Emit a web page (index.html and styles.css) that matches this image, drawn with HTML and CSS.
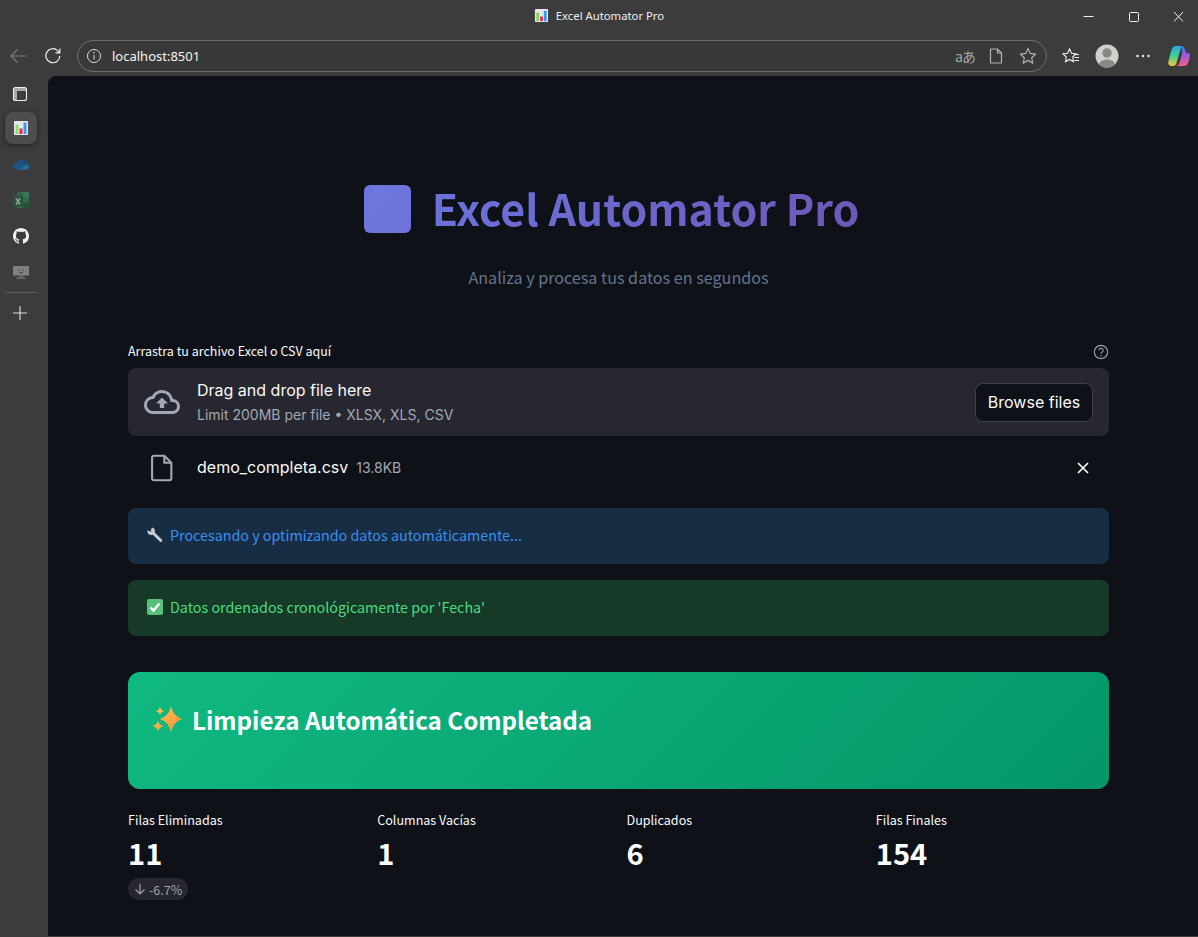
FILE: index.html
```html
<!DOCTYPE html>
<html lang="es">
<head>
<meta charset="utf-8">
<title>Excel Automator Pro</title>
<link rel="stylesheet" href="styles.css">
</head>
<body>
<div class="window">
  <header class="titlebar">
    <div class="title-spacer"></div>
    <div class="window-title">
      <svg class="favicon" viewBox="0 0 16 16"><rect x="1" y="1" width="14" height="14" rx="1" fill="#e8e8ec"/><rect x="2.5" y="5" width="3" height="9" fill="#7bd651"/><rect x="6.5" y="9" width="3" height="5" fill="#e8285f"/><rect x="10.5" y="3" width="3" height="11" fill="#2e9df0"/></svg>
      <span>Excel Automator Pro</span>
    </div>
    <div class="window-controls">
      <svg class="win-btn" viewBox="-3 0 45 32"><path d="M17.500 16.500h10" stroke="#f2f2f2" fill="none"/></svg>
      <svg class="win-btn" viewBox="-3 0 45 32"><rect x="18.500" y="12.500" width="9" height="9" rx="1" stroke="#f2f2f2" fill="none"/></svg>
      <svg class="win-btn" viewBox="-3 0 45 32"><path d="M18 12l9 9.500M27 12l-9 9.500" stroke="#f2f2f2" fill="none"/></svg>
    </div>
  </header>
  <nav class="toolbar">
    <div class="tool-btn"><svg width="18" height="16" viewBox="0 0 18 16"><path d="M17 8H2M8.500 1.500 2 8l6.500 6.500" stroke="#7d7d7d" stroke-width="1.200" fill="none"/></svg></div>
    <div class="tool-btn"><svg width="18" height="18" viewBox="0 0 18 18"><path d="M15.800 9a7 7 0 1 1-2-5.200L15.600 5.600M15.800 1.500v4.300h-4.300" stroke="#f0f0f0" stroke-width="1.200" fill="none"/></svg></div>
    <div class="address">
      <svg class="addr-info" width="16" height="16" viewBox="0 0 16 16"><circle cx="8" cy="8" r="6.500" stroke="#e0e0e0" fill="none"/><path d="M8 7v4.500" stroke="#e0e0e0" fill="none"/><circle cx="8" cy="4.800" r=".8" fill="#e0e0e0"/></svg>
      <span class="url">localhost:8501</span>
      <span class="translate">aあ</span>
      <svg class="addr-page" width="14" height="16" viewBox="0 0 14 16"><path d="M2.500 1h6l4 4v9a1 1 0 0 1-1 1h-9a1 1 0 0 1-1-1V2a1 1 0 0 1 1-1zM8.500 1v4h4" stroke="#b5b5b5" stroke-width="1.200" fill="none"/></svg>
      <svg class="addr-star" width="18" height="18" viewBox="0 0 18 18"><path d="M9 1.500l2.300 4.900 5.300.7-3.900 3.700 1 5.300L9 13.500l-4.700 2.600 1-5.300-3.900-3.700 5.300-.7z" stroke="#b5b5b5" stroke-width="1.100" fill="none"/></svg>
    </div>
    <div class="tool-right">
      <div class="tool-btn"><svg width="18" height="18" viewBox="0 0 18 18"><path d="M7.500 2l2 4.300 4.500.6-3.300 3.100.8 4.600-4-2.200-4 2.200.8-4.600L1 6.900l4.500-.6z" stroke="#f0f0f0" stroke-width="1.100" fill="none"/><path d="M12.500 7.500h4.500M12.500 10.500h4.500M12.500 13.500h4.500" stroke="#f0f0f0" fill="none"/></svg></div>
      <div class="tool-btn"><svg width="24" height="24" viewBox="0 0 24 24"><clipPath id="av"><circle cx="12" cy="12" r="11.500"/></clipPath><circle cx="12" cy="12" r="11.500" fill="#d3d0cb"/><g clip-path="url(#av)" fill="#8a8885"><circle cx="12" cy="9" r="4.700"/><ellipse cx="12" cy="21" rx="8" ry="5.500"/></g></svg></div>
      <div class="tool-btn"><svg width="16" height="4" viewBox="0 0 16 4"><circle cx="2.500" cy="2" r="1.200" fill="#eee"/><circle cx="8" cy="2" r="1.200" fill="#eee"/><circle cx="13.500" cy="2" r="1.200" fill="#eee"/></svg></div>
      <div class="tool-btn"><svg width="24" height="24" viewBox="0 0 24 24"><defs><linearGradient id="cpa" x1="0" y1="0" x2="0" y2="1"><stop offset="0" stop-color="#28a7e8"/><stop offset=".5" stop-color="#3ed08a"/><stop offset="1" stop-color="#f7c53a"/></linearGradient><linearGradient id="cpb" x1="0" y1="0" x2="0" y2="1"><stop offset="0" stop-color="#3f7ff0"/><stop offset=".5" stop-color="#a854e0"/><stop offset="1" stop-color="#f4607c"/></linearGradient></defs><path d="M8 2h6.500L9.500 19a4 4 0 0 1-3.800 3H4.500a3.200 3.200 0 0 1-3.200-4C2.500 13 4 7 5 5a4 4 0 0 1 3-3z" fill="url(#cpa)"/><path d="M14 2c2 0 3.200 1 3.800 3l1.200 4h1.500c2 0 3 1.500 2.400 3.500l-1.600 6c-.6 2-2 3.500-4.300 3.500H8.500c2 0 3.500-1.500 4-3.500l2.500-8.500c.8-3-.2-5-1-8z" fill="url(#cpb)"/></svg></div>
    </div>
  </nav>
  <div class="workspace">
    <aside class="sidebar">
      <div class="side-item side-first"><svg width="16" height="16" viewBox="0 0 16 16"><path d="M1.500 5h13V3a1.500 1.500 0 0 0-1.500-1.500H3A1.500 1.500 0 0 0 1.500 3zM1.500 5h3.500v9.500H3A1.500 1.500 0 0 1 1.500 13z" fill="#a9a9a9"/><rect x="1.500" y="1.500" width="13" height="13" rx="2" stroke="#eee" stroke-width="1.100" fill="none"/></svg></div>
      <div class="side-item side-active"><svg width="16" height="16" viewBox="0 0 16 16"><rect x="1" y="1" width="14" height="14" rx="1" fill="#e8e8ec"/><rect x="2.500" y="4.500" width="3" height="9.500" fill="#8fe06a"/><rect x="6.500" y="8.500" width="3" height="5.500" fill="#e8285f"/><rect x="10.500" y="2.500" width="3" height="11.500" fill="#2e9df0"/></svg></div>
      <div class="side-item"><svg width="16" height="12" viewBox="0 0 16 12"><path d="M1 7.500A3 3 0 0 1 4 5a4.500 4.500 0 0 1 8-1.500 3.500 3.500 0 0 1 4 3.800L9 6z" fill="#17507f"/><path d="M4 5c1.500-1 3.500-.5 5 1l4 2-9 3.500A2.800 2.800 0 0 1 .3 8 3 3 0 0 1 4 5z" fill="#1b5585"/><path d="M13 6.500c1.500 0 3 1 3 2.700 0 1.500-1.200 2.500-2.500 2.500h-9L10 9z" fill="#256c9f"/></svg></div>
      <div class="side-item"><svg class="dim-icon" width="16" height="16" viewBox="0 0 16 16"><path d="M4 0h12v16H4z" fill="#2c6f4c"/><path d="M10 0h6v5h-6z" fill="#37835d"/><path d="M10 11h6v5h-6z" fill="#215639"/><rect x="0" y="3.500" width="10" height="11" fill="#215a3c"/><path d="M3 6.500l4 6M7 6.500l-4 6" stroke="#a9b5ad" stroke-width="1.400" fill="none"/></svg></div>
      <div class="side-item"><svg width="16" height="16" viewBox="0 0 16 16"><path fill="#f2f2f2" d="M8 0C3.580 0 0 3.580 0 8c0 3.540 2.290 6.530 5.470 7.590.4.070.55-.17.550-.38 0-.19-.01-.82-.01-1.490-2.010.37-2.530-.49-2.690-.94-.09-.23-.48-.94-.82-1.130-.28-.15-.68-.52-.01-.53.630-.01 1.080.58 1.230.82.720 1.210 1.870.87 2.330.66.070-.52.280-.87.510-1.070-1.780-.2-3.640-.89-3.640-3.950 0-.87.310-1.590.820-2.150-.08-.2-.36-1.020.08-2.120 0 0 .67-.21 2.200.82.640-.18 1.320-.27 2-.27.680 0 1.360.09 2 .27 1.530-1.040 2.200-.82 2.200-.82.440 1.100.16 1.920.08 2.120.51.560.82 1.270.82 2.150 0 3.070-1.870 3.750-3.650 3.950.29.250.54.730.54 1.480 0 1.070-.01 1.930-.01 2.200 0 .21.150.46.550.38A8.010 8.010 0 0 0 16 8c0-4.420-3.580-8-8-8z"/></svg></div>
      <div class="side-item"><svg width="16" height="13" viewBox="0 0 16 13"><rect x="0" y="0" width="16" height="9.500" fill="#808080"/><rect x="5.500" y="9.500" width="5" height="2" fill="#686868"/><rect x="3.500" y="11.500" width="9" height="1.500" fill="#686868"/><path d="M6 3v1.500M10 3v1.500M6 6c1 1 3 1 4 0" stroke="#333" stroke-width=".8" fill="none"/></svg></div>
      <div class="side-sep"></div>
      <div class="side-plus"><svg width="14" height="14" viewBox="0 0 14 14"><path d="M7 0v14M0 7h14" stroke="#dedede" stroke-width="1.100" fill="none"/></svg></div>
    </aside>
    <main class="main">
      <div class="hero">
        <div class="hero-title"><span class="hero-icon"></span><h1>Excel Automator Pro</h1></div>
        <p class="hero-sub">Analiza y procesa tus datos en segundos</p>
      </div>
      <div class="upload-label">
        <span>Arrastra tu archivo Excel o CSV aquí</span>
        <svg class="help" width="16" height="16" viewBox="0 0 16 16"><circle cx="8" cy="8" r="6.700" stroke="#9a9ca3" stroke-width="1.200" fill="none"/><path d="M5.900 6.300a2.100 2.100 0 1 1 3.300 1.700c-.8.500-1.200.9-1.200 1.700" stroke="#9a9ca3" stroke-width="1.200" fill="none"/><circle cx="8" cy="11.700" r=".8" fill="#9a9ca3"/></svg>
      </div>
      <section class="dropzone">
        <svg class="cloud" width="36" height="36" viewBox="0 0 24 24"><path fill="#a3a8b4" d="M19.350 10.040A7.490 7.490 0 0 0 12 4C9.110 4 6.600 5.640 5.350 8.040A5.994 5.994 0 0 0 0 14c0 3.310 2.690 6 6 6h13c2.760 0 5-2.240 5-5 0-2.640-2.050-4.780-4.650-4.960zM19 18H6c-2.210 0-4-1.790-4-4 0-2.050 1.530-3.760 3.560-3.970l1.070-.11.500-.95A5.469 5.469 0 0 1 12 6c2.620 0 4.880 1.860 5.390 4.430l.3 1.500 1.530.11A2.980 2.980 0 0 1 22 15c0 1.650-1.350 3-3 3zM8 13h2.550v3h2.900v-3H16l-4-4z"/></svg>
        <div class="drop-text">
          <div class="drop-main">Drag and drop file here</div>
          <div class="drop-sub">Limit 200MB per file • XLSX, XLS, CSV</div>
        </div>
        <button class="browse">Browse files</button>
      </section>
      <section class="file-row">
        <svg class="file-icon" width="24" height="28" viewBox="0 0 20 24"><path d="M3 1.500h9l6 6v13.500a1.500 1.500 0 0 1-1.500 1.500H3A1.500 1.500 0 0 1 1.500 21V3A1.500 1.500 0 0 1 3 1.500zM12 1.500v6h6" stroke="#a3a8b4" stroke-width="1.800" fill="none"/></svg>
        <span class="file-name">demo_completa.csv</span>
        <span class="file-size">13.8KB</span>
        <svg class="file-x" width="12" height="12" viewBox="0 0 12 12"><path d="M1 1l10 10M11 1L1 11" stroke="#fafafa" stroke-width="1.700" fill="none"/></svg>
      </section>
      <div class="alert alert-info">
        <svg class="emoji" width="16" height="16" viewBox="0 0 16 16"><path d="M5.500 5.500L13.800 13.500" stroke="#c7ccd3" stroke-width="3" stroke-linecap="round" fill="none"/><circle cx="4.200" cy="4.200" r="3.700" fill="#c7ccd3"/><path d="M0 0h5L3.800 3.800 4.800 5 0 3z" fill="#172d43"/></svg>
        <span>Procesando y optimizando datos automáticamente...</span>
      </div>
      <div class="alert alert-success">
        <svg class="emoji" width="16" height="16" viewBox="0 0 16 16"><rect width="16" height="16" rx="2" fill="#59c07a"/><path d="M3.500 8.500l3 3 6-7" stroke="#fff" stroke-width="2.400" fill="none"/></svg>
        <span>Datos ordenados cronológicamente por 'Fecha'</span>
      </div>
      <section class="banner">
        <svg class="sparkle" width="30" height="30" viewBox="0 0 30 30"><defs><linearGradient id="sp" x1="0" y1="0" x2="1" y2="1"><stop offset="0" stop-color="#ffc44d"/><stop offset="1" stop-color="#fb8f3c"/></linearGradient></defs><path d="M19 1Q21 11 30 14 21 17 19 27 17 17 8 14 17 11 19 1zM8 2Q8.800 5.200 12 6 8.800 6.800 8 10 7.200 6.800 4 6 7.200 5.200 8 2zM6 15.500Q7 20 11.500 21 7 22 6 26.500 5 22 .5 21 5 20 6 15.500z" fill="url(#sp)"/></svg>
        <h2>Limpieza Automática Completada</h2>
      </section>
      <section class="metrics">
        <div class="metric">
          <div class="metric-label">Filas Eliminadas</div>
          <div class="metric-value">11</div>
          <div class="delta"><svg width="12" height="12" viewBox="0 0 12 12"><path d="M6 1v10M1.500 6.500 6 11l4.500-4.500" stroke="#a0a2a8" stroke-width="1.200" fill="none"/></svg><span>-6.7%</span></div>
        </div>
        <div class="metric">
          <div class="metric-label">Columnas Vacías</div>
          <div class="metric-value">1</div>
        </div>
        <div class="metric">
          <div class="metric-label">Duplicados</div>
          <div class="metric-value">6</div>
        </div>
        <div class="metric">
          <div class="metric-label">Filas Finales</div>
          <div class="metric-value">154</div>
        </div>
      </section>
    </main>
  </div>
</div>
</body>
</html>
```
FILE: styles.css
```css
* { box-sizing: border-box; }
html, body { margin: 0; padding: 0; height: 100%; }
body { background: #3c3c3c; overflow: hidden; }
.window { width: 1198px; height: 937px; display: flex; flex-direction: column; font-family: "Noto Sans", sans-serif; color: #fff; }

.titlebar { height: 32px; display: grid; grid-template-columns: 1fr auto 1fr; align-items: center; }
.window-title { display: flex; align-items: center; gap: 7px; font-size: 11.3px; color: #efefef; padding-bottom: 1px; }
.favicon { width: 15px; height: 15px; }
.window-controls { display: flex; justify-content: flex-end; }
.win-btn { width: 45px; height: 32px; display: block; }

.toolbar { height: 44px; display: flex; align-items: flex-start; padding-top: 8px; }
.tool-btn { width: 36px; height: 32px; display: flex; align-items: center; justify-content: center; flex: none; }
.toolbar > .tool-btn:nth-child(1) { width: 35px; }
.address { margin-left: 6px; width: 970px; height: 32px; border: 1px solid #6e6e6e; border-radius: 16px; background: #393939; display: flex; align-items: center; padding: 0 9px 0 8px; flex: none; }
.url { font-size: 13px; margin-left: 10px; color: #f4f4f4; flex: 1; }
.translate { font-family: "Noto Sans CJK JP", sans-serif; font-size: 14px; color: #a8a8a8; margin-right: 14px; letter-spacing: -1px; }
.addr-page { margin-right: 16px; }
.tool-right { margin-left: 6px; display: flex; flex: none; }

.workspace { flex: 1; display: flex; min-height: 0; }
.sidebar { width: 48px; flex: none; padding: 2px 0 0 5px; display: flex; flex-direction: column; }
.side-item { width: 32px; height: 32px; margin-bottom: 4px; display: flex; align-items: center; justify-content: center; border-radius: 8px; }
.side-first { margin-bottom: 2px; margin-left: -1px; }
.side-active { background: #4d4d4d; box-shadow: 0 1px 5px rgba(0,0,0,.45); }
.dim-icon { opacity: .85; }
.side-sep { width: 32px; height: 1px; background: #5e5e5e; }
.side-plus { width: 30px; height: 40px; display: flex; align-items: center; justify-content: center; }

.main { flex: 1; height: 860px; background: #0e1117; border-top-left-radius: 8px; padding: 105px 89px 0 80px; font-family: "Noto Sans CJK SC", "Noto Sans", sans-serif; }

.hero { text-align: center; }
.hero-title { display: flex; justify-content: center; align-items: center; gap: 21px; padding-right: 14px; height: 52px; }
.hero-icon { width: 47px; height: 48px; margin-top: 4px; border-radius: 6px; background: linear-gradient(135deg, #6c78de, #6e72d8); }
.hero-title h1 { margin: 0; font-size: 42.9px; line-height: 52px; font-weight: 700; background: linear-gradient(100deg, #6a72da, #6d59b8); -webkit-background-clip: text; background-clip: text; color: transparent; }
.hero-sub { margin: 30px 0 0; font-size: 16.15px; line-height: 28px; color: #64748b; }

.upload-label { margin-top: 47px; height: 24px; display: flex; align-items: center; justify-content: space-between; font-size: 12.5px; color: #fafafa; }
.help { margin-top: 4px; }
.dropzone { margin-top: 6px; height: 68px; background: #262730; border-radius: 8px; display: flex; align-items: center; padding: 0 16px; font-family: Inter, sans-serif; }
.cloud { margin-right: 17px; flex: none; }
.drop-text { flex: 1; }
.drop-main { font-size: 16px; line-height: 24px; color: #fafafa; }
.drop-sub { font-size: 14px; line-height: 24px; color: #a3a8b4; position: relative; top: 1px; }
.browse { height: 39px; width: 118px; background: #0e1117; border: 1px solid #3f414b; border-radius: 8px; color: #fafafa; font: 16px Inter, sans-serif; padding: 0; }

.file-row { height: 64px; display: flex; align-items: center; padding: 0 20px 0 22px; font-family: Inter, sans-serif; }
.file-icon { margin-right: 23px; flex: none; }
.file-name { font-size: 16px; color: #fafafa; margin-bottom: 2px; }
.file-size { font-size: 14px; color: #a3a8b4; margin: 0 0 2px 8px; flex: 1; }
.file-x { flex: none; }

.alert { margin-top: 8px; height: 56px; border-radius: 8px; padding: 0 19px 2px; display: flex; align-items: center; font-size: 14.3px; gap: 7px; }
.alert span { margin-bottom: 2px; }
.alert + .alert { margin-top: 16px; }
.emoji { flex: none; }
.alert-info { background: #172d43; color: #3a8ff0; }
.alert-success { background: #173928; color: #4ade80; }

.banner { margin-top: 36px; height: 117px; border-radius: 12px; background: linear-gradient(135deg, #10b981, #059669); padding: 33px 24px 0; display: flex; align-items: flex-start; gap: 10px; }
.banner h2 { margin: -1px 0 0; font-size: 24.15px; line-height: 32px; font-weight: 600; color: #fff; }
.sparkle { flex: none; }

.metrics { margin-top: 20px; display: grid; grid-template-columns: repeat(4, 1fr); gap: 16px; }
.metric-label { font-size: 12.55px; line-height: 22px; color: #fafafa; }
.metric-value { margin-top: 1px; font-size: 29.1px; line-height: 40px; font-weight: 700; color: #fff; }
.delta { margin-top: 6px; display: inline-flex; align-items: center; gap: 3px; height: 22px; padding: 0 6px; border-radius: 11px; background: #262730; font-size: 12.5px; color: #a0a2a8; }
```
